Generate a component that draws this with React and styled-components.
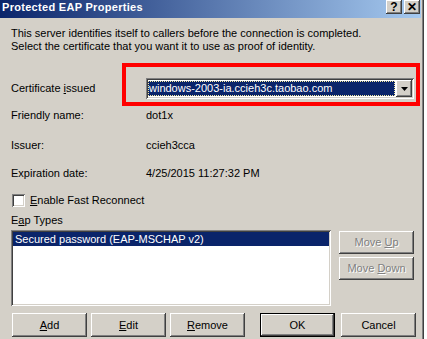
import React from "react";
import styled, { createGlobalStyle, css } from "styled-components";

const GlobalStyle = createGlobalStyle`
  html, body {
    margin: 0;
    padding: 0;
    background: #ffffff;
  }
  body {
    font-family: "Liberation Sans", Arial, sans-serif;
    font-size: 11px;
    line-height: 13px;
    color: #000;
  }
`;

const raised = css`
  background: #d4d0c8;
  box-shadow: inset -1px -1px #404040, inset 1px 1px #ffffff,
    inset -2px -2px #808080, inset 2px 2px #d4d0c8;
`;

const sunken = css`
  background: #ffffff;
  box-shadow: inset 1px 1px #808080, inset -1px -1px #ffffff,
    inset 2px 2px #404040, inset -2px -2px #d4d0c8;
`;

const Window = styled.div`
  width: 424px;
  height: 339px;
  overflow: hidden;
  box-sizing: border-box;
  background: #d4d0c8;
  padding-right: 3px;
  box-shadow: inset -1px 0 #404040, inset -2px 0 #808080;
  display: flex;
  flex-direction: column;
`;

const TitleBar = styled.div`
  height: 18px;
  flex: none;
  display: flex;
  align-items: flex-start;
  justify-content: space-between;
  padding: 0 1px 0 2px;
  background: linear-gradient(to right, #0a246a, #a6caf0);
`;

const TitleText = styled.div`
  color: #fff;
  font-weight: bold;
  letter-spacing: 0.3px;
  padding-top: 1px;
`;

const CaptionButtons = styled.div`
  display: flex;
  gap: 2px;
`;

const CaptionButton = styled.div`
  ${raised};
  width: 16px;
  height: 14px;
  display: flex;
  align-items: center;
  justify-content: center;
  font-weight: bold;
  font-size: 12px;
  color: #000;
`;

const Content = styled.div`
  padding-left: 11px;
  display: flex;
  flex-direction: column;
`;

const Intro = styled.p`
  margin: 9px 0 0;
  white-space: nowrap;
`;

const CertRow = styled.div`
  display: flex;
  align-items: center;
  margin-top: 25px;
`;

const Label = styled.div`
  width: 135px;
  flex: none;
  white-space: nowrap;
`;

const Combo = styled.div`
  ${sunken};
  position: relative;
  width: 268px;
  height: 21px;
  box-sizing: border-box;
  padding: 2px;
  display: flex;
  gap: 1px;
`;

const ComboField = styled.div`
  flex: 1;
  display: flex;
  align-items: center;
  padding: 1px 0 1px 0;
`;

const ComboText = styled.div`
  flex: 1;
  height: 15px;
  box-sizing: border-box;
  background: #0a246a;
  color: #fff;
  outline: 1px dotted #f4e8a0;
  outline-offset: -1px;
  padding-left: 1px;
  line-height: 15px;
  white-space: nowrap;
`;

const DropButton = styled.div`
  ${raised};
  width: 16px;
  flex: none;
  display: flex;
  align-items: center;
  justify-content: center;
`;

const Highlight = styled.div`
  position: absolute;
  left: -24px;
  top: -15px;
  right: -6px;
  bottom: -7px;
  border: 4px solid #ff0000;
  pointer-events: none;
`;

const InfoRow = styled.div`
  display: flex;
  margin-top: ${(p) => p.$gap}px;
  height: 13px;
`;

const Value = styled.div`
  white-space: nowrap;
`;

const CheckRow = styled.label`
  display: flex;
  align-items: center;
  gap: 5px;
  margin-top: 13px;
  height: 14px;
  padding-left: 1px;
`;

const CheckBox = styled.span`
  ${sunken};
  width: 13px;
  height: 13px;
  flex: none;
`;

const SectionLabel = styled.div`
  margin-top: 7px;
  height: 13px;
`;

const ListArea = styled.div`
  display: flex;
  gap: 8px;
  margin-top: 3px;
`;

const ListBox = styled.div`
  ${sunken};
  width: 320px;
  height: 76px;
  box-sizing: border-box;
  padding: 2px;
`;

const ListItem = styled.div`
  height: 14px;
  line-height: 14px;
  padding-left: 2px;
  background: ${(p) => (p.$selected ? "#0a246a" : "transparent")};
  color: ${(p) => (p.$selected ? "#fff" : "#000")};
  white-space: nowrap;
`;

const SideButtons = styled.div`
  display: flex;
  flex-direction: column;
  gap: 3px;
  padding-top: 1px;
`;

const Button = styled.div`
  ${raised};
  width: 75px;
  height: ${(p) => p.$h || 23}px;
  flex: none;
  box-sizing: border-box;
  display: flex;
  align-items: center;
  justify-content: center;
  margin-left: ${(p) => p.$ml || 0}px;
  color: ${(p) => (p.disabled ? "#808080" : "#000")};
  text-shadow: ${(p) => (p.disabled ? "1px 1px 0 #ffffff" : "none")};
  white-space: nowrap;
  ${(p) =>
    p.$default &&
    css`
      box-shadow: inset 0 0 0 1px #000, inset -2px -2px #404040,
        inset 2px 2px #ffffff, inset -3px -3px #808080;
    `}
`;

const ButtonRow = styled.div`
  display: flex;
  margin-top: 7px;
  padding-left: 1px;
`;

const Arrow = () => (
  <svg width="7" height="4" viewBox="0 0 7 4">
    <path d="M0 0h7L3.5 4z" fill="#000" />
  </svg>
);

const App = () => (
  <>
    <GlobalStyle />
    <Window>
      <TitleBar>
        <TitleText>Protected EAP Properties</TitleText>
        <CaptionButtons>
          <CaptionButton>?</CaptionButton>
          <CaptionButton>✕</CaptionButton>
        </CaptionButtons>
      </TitleBar>
      <Content>
        <Intro>
          This server identifies itself to callers before the connection is completed.
          <br />
          Select the certificate that you want it to use as proof of identity.
        </Intro>
        <CertRow>
          <Label>
            Certificate <u>i</u>ssued
          </Label>
          <Combo>
            <ComboField>
              <ComboText>windows-2003-ia.ccieh3c.taobao.com</ComboText>
            </ComboField>
            <DropButton>
              <Arrow />
            </DropButton>
            <Highlight />
          </Combo>
        </CertRow>
        <InfoRow $gap={10}>
          <Label>Friendly name:</Label>
          <Value>dot1x</Value>
        </InfoRow>
        <InfoRow $gap={17}>
          <Label>Issuer:</Label>
          <Value>ccieh3cca</Value>
        </InfoRow>
        <InfoRow $gap={15}>
          <Label>Expiration date:</Label>
          <Value>4/25/2015 11:27:32 PM</Value>
        </InfoRow>
        <CheckRow>
          <CheckBox />
          <span>
            <u>E</u>nable Fast Reconnect
          </span>
        </CheckRow>
        <SectionLabel>
          E<u>a</u>p Types
        </SectionLabel>
        <ListArea>
          <ListBox>
            <ListItem $selected>Secured password (EAP-MSCHAP v2)</ListItem>
          </ListBox>
          <SideButtons>
            <Button disabled>
              Move&nbsp;<u>U</u>p
            </Button>
            <Button disabled>
              Move&nbsp;<u>D</u>own
            </Button>
          </SideButtons>
        </ListArea>
        <ButtonRow>
          <Button $h={24}>
            <u>A</u>dd
          </Button>
          <Button $h={24} $ml={4}>
            <u>E</u>dit
          </Button>
          <Button $h={24} $ml={4}>
            <u>R</u>emove
          </Button>
          <Button $h={24} $ml={15} $default>
            OK
          </Button>
          <Button $h={24} $ml={6}>
            Cancel
          </Button>
        </ButtonRow>
      </Content>
    </Window>
  </>
);

export default App;
